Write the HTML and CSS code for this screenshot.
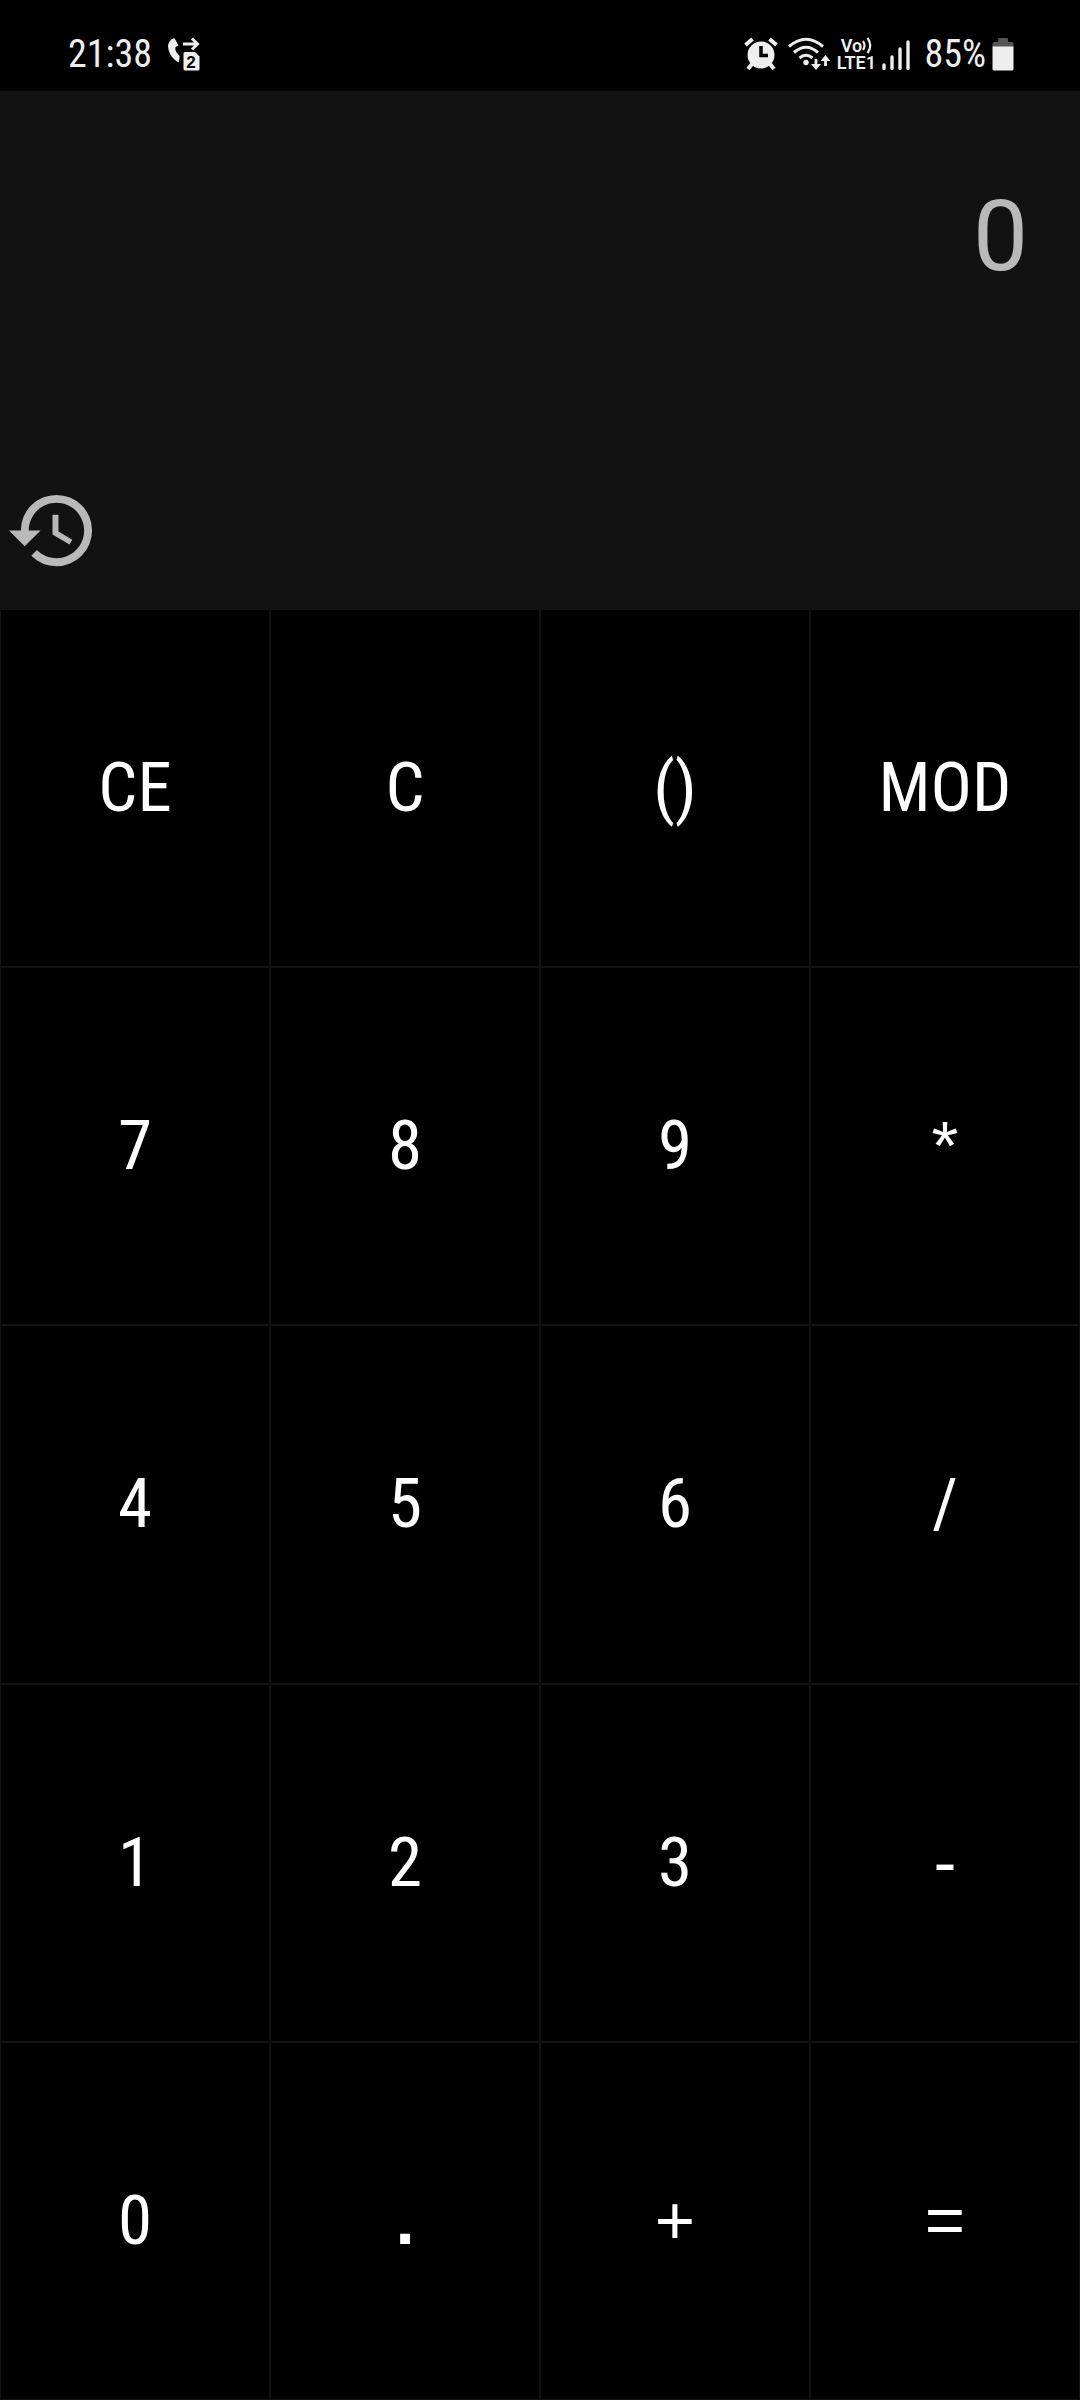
FILE: index.html
```html
<!DOCTYPE html>
<html lang="en">
<head>
<meta charset="utf-8">
<meta name="viewport" content="width=device-width, initial-scale=1">
<title>Calculator</title>
<link rel="stylesheet" href="styles.css">
</head>
<body>
<div class="app">
  <header class="status">
    <div class="status-group">
      <time class="clock">21:38</time>
      <svg class="icon" width="32" height="34" viewBox="0 0 32 34" role="img" aria-label="Call forwarding, SIM 2">
        <path fill="currentColor" d="M5 1.500C2.500 3-.2 6 .1 10c.6 7 5.300 13 10.900 15.500l.6-6.500-3-3.500C7.300 13.500 7 12 7.600 10l2.900-1.500L7 2Q6 1 5 1.500z"/>
        <path fill="none" stroke="currentColor" stroke-width="3" d="M15 7h14M24 1.500 29.500 7 24 12.500"/>
        <path fill="currentColor" d="M17 15h10l4.500 4.500V32q0 1.500-1.500 1.500H17q-1.500 0-1.500-1.500V16.500Q15.500 15 17 15z"/>
        <text class="sim-digit" x="23" y="31" text-anchor="middle">2</text>
      </svg>
    </div>
    <div class="status-group status-right">
      <svg class="icon alarm" width="34" height="34" viewBox="0 0 34 34" role="img" aria-label="Alarm">
        <path fill="none" stroke="currentColor" stroke-width="4" d="M1.500 8 8.500 2M32.500 8 25.500 2M8 27l-4 5M26 27l4 5"/>
        <circle cx="17" cy="18" r="13.500" fill="currentColor"/>
        <path fill="none" stroke="#000" stroke-width="3.500" d="M17 9v9.500h7"/>
      </svg>
      <svg class="icon wifi" width="42" height="34" viewBox="0 0 42 34" role="img" aria-label="Wi-Fi">
        <path fill="none" stroke="currentColor" stroke-width="3" d="M1 9.500Q18-5 35 9.500M6 15.500Q18 5 30 15.500M11.500 21q6.500-5.500 13 0"/>
        <circle cx="18" cy="25.500" r="2.700" fill="currentColor"/>
        <path fill="none" stroke="currentColor" stroke-width="2.800" d="M28 22v9M37.500 29V20"/>
        <path fill="currentColor" d="M23 27h10l-5 6zM32.500 24h10l-5-6z"/>
      </svg>
      <div class="volte">
        <span class="volte-row">Vo<svg width="10" height="17" viewBox="0 0 10 17" aria-hidden="true"><path fill="none" stroke="currentColor" stroke-width="2.200" d="M1 4q3 4.500 0 9M5.500 1q5.500 7.500 0 15"/></svg></span>
        <span class="volte-row">LTE1</span>
      </div>
      <svg class="icon signal" width="28" height="34" viewBox="0 0 28 34" role="img" aria-label="Signal strength">
        <path fill="none" stroke="currentColor" stroke-width="3.400" stroke-linecap="round" d="M2 28v3.500M10 20v11.500M18 12v19.500M26 5v26.500"/>
      </svg>
      <span class="level">85%</span>
      <svg class="icon" width="22" height="34" viewBox="0 0 22 34" role="img" aria-label="Battery">
        <path fill="#555" d="M6 2q0-1 1-1h8q1 0 1 1v3h4q1.500 0 1.500 1.500V10H.5V6.500Q.5 5 2 5h4z"/>
        <path fill="currentColor" d="M.5 9.500h21V32q0 1.500-1.500 1.500H2Q.5 33.500.5 32z"/>
      </svg>
    </div>
  </header>

  <main class="calculator">
    <section class="display">
      <output class="result">0</output>
      <button class="history" type="button" aria-label="History">
        <svg width="95" height="95" viewBox="0 0 24 24" aria-hidden="true">
          <path fill="currentColor" d="M13 3a9 9 0 0 0-9 9H1l3.960 3.960L9 12H6c0-3.870 3.130-7 7-7s7 3.130 7 7-3.130 7-7 7c-1.930 0-3.680-.79-4.940-2.060l-1.420 1.420A8.950 8.950 0 0 0 13 21a9 9 0 0 0 0-18zm-1 5v5l4.280 2.540.72-1.210-3.500-2.080V8z"/>
        </svg>
      </button>
    </section>
    <section class="keypad" aria-label="Keypad">
      <button class="key" type="button">CE</button>
      <button class="key" type="button">C</button>
      <button class="key" type="button">()</button>
      <button class="key" type="button">MOD</button>
      <button class="key" type="button">7</button>
      <button class="key" type="button">8</button>
      <button class="key" type="button">9</button>
      <button class="key key-symbol" type="button">*</button>
      <button class="key" type="button">4</button>
      <button class="key" type="button">5</button>
      <button class="key" type="button">6</button>
      <button class="key" type="button">/</button>
      <button class="key" type="button">1</button>
      <button class="key" type="button">2</button>
      <button class="key" type="button">3</button>
      <button class="key key-symbol" type="button">-</button>
      <button class="key" type="button">0</button>
      <button class="key key-symbol key-strong" type="button">.</button>
      <button class="key key-symbol" type="button">+</button>
      <button class="key key-symbol" type="button">=</button>
    </section>
  </main>
</div>
</body>
</html>
```
FILE: styles.css
```css
* {
  box-sizing: border-box;
}

body {
  margin: 0;
  background: #000;
  color: #fff;
  font-family: "Roboto Condensed", Roboto, sans-serif;
}

.app {
  display: flex;
  flex-direction: column;
  min-height: 100vh;
}

.status {
  display: flex;
  align-items: center;
  justify-content: space-between;
  height: 91px;
  padding: 16px 66px 0 68px;
  color: #eee;
  font-size: 38px;
  line-height: 48px;
}

.status-group {
  display: flex;
  align-items: center;
  gap: 16px;
}

.status-right {
  gap: 6px;
}

.icon {
  display: block;
  flex: none;
}

.alarm {
  margin-right: 4px;
}

.signal {
  margin-right: 8px;
}

.sim-digit {
  fill: #000;
  font: bold 17px "Liberation Sans", sans-serif;
}

.volte {
  display: flex;
  flex-direction: column;
  width: 40px;
  font: 600 18px/17px Roboto, sans-serif;
}

.volte-row {
  display: flex;
  justify-content: center;
}

.calculator {
  display: grid;
  flex: 1;
  grid-template-rows: 518fr 1791fr;
}

.display {
  display: flex;
  flex-direction: column;
  justify-content: space-between;
  padding: 90px 52px 31px 5px;
  background: #121212;
  color: #b9b9b9;
}

.result {
  align-self: flex-end;
  font-family: Roboto, sans-serif;
  font-size: 98px;
  line-height: 112px;
}

.history {
  align-self: flex-start;
  padding: 0;
  border: 0;
  background: none;
  color: inherit;
}

.history svg {
  display: block;
}

.keypad {
  display: grid;
  grid-template-columns: repeat(4, 1fr);
  grid-auto-rows: 1fr;
}

.key {
  padding: 0;
  border: 1px solid #121212;
  background: #000;
  color: #fff;
  font-family: inherit;
  font-size: 69px;
  line-height: 80px;
}

.key-symbol {
  font-family: "Liberation Sans", sans-serif;
}

.key-strong {
  font-weight: bold;
}
```
